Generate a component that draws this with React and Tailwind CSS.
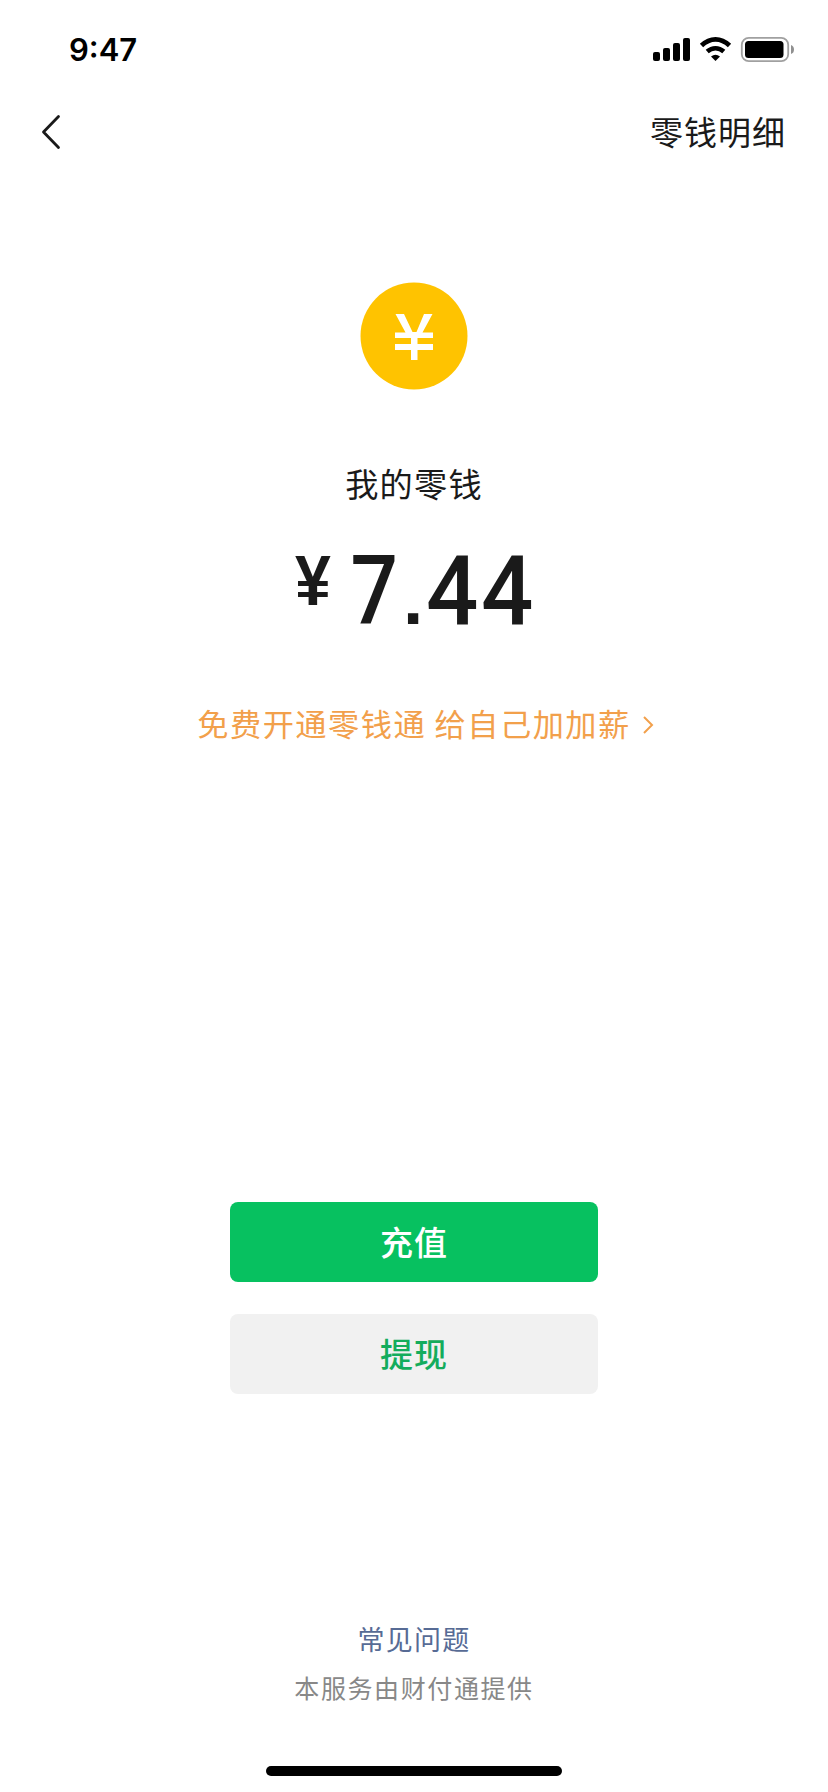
function StatusBar() {
  return (
    <div className="flex h-[88px] items-start justify-between pl-[69px] pr-[34px] text-black">
      <span className="mt-[30px] font-['Inter',sans-serif] text-[31px] font-semibold leading-[40px]">9:47</span>
      <svg className="mt-[34px]" width="142" height="30" viewBox="652 34 142 30" fill="none">
        <g fill="#000">
          <rect x="653" y="52" width="7" height="9" rx="2" />
          <rect x="663" y="48" width="7" height="13" rx="2" />
          <rect x="673" y="43" width="7" height="18" rx="2" />
          <rect x="683" y="38" width="7" height="23" rx="2" />
          <path d="M715.5 61 L711 56.6 Q715.5 52.8 720 56.6 Z" />
        </g>
        <path d="M701.5 45.6 Q708 39.4 715.5 39.4 T729.5 45.6" stroke="#000" strokeWidth="4.8" />
        <path d="M707.2 51.6 Q711 48.3 715.5 48.3 T723.8 51.6" stroke="#000" strokeWidth="4.6" />
        <rect x="741.8" y="37.8" width="46.4" height="23.4" rx="7" stroke="#a0a0a0" strokeWidth="1.8" />
        <rect x="745" y="41" width="38.5" height="17" rx="3.5" fill="#000" />
        <path d="M791 45 Q794 46 794 49.5 T791 54 Z" fill="#909090" />
      </svg>
    </div>
  );
}

function Amount() {
  return (
    <div className="mt-[36px] flex h-[96px] items-start font-['Roboto',sans-serif] text-[96px] font-medium leading-[96px]">
      <span className="-mt-[2px] mr-[14px] w-[40px] scale-x-[0.92] text-center font-['Liberation_Sans',sans-serif] text-[70px] font-bold leading-[80px]">¥</span>
      <span className="w-[52px] scale-x-[0.87] text-center">7</span>
      <span className="ml-[1px] mr-[1px] w-[24px] origin-[50%_85%] scale-[0.76] text-center font-['Liberation_Sans',sans-serif] font-bold">.</span>
      <span className="flex w-[55px] justify-center"><span className="scale-x-[0.96]">4</span></span>
      <span className="flex w-[55px] justify-center"><span className="scale-x-[0.96]">4</span></span>
    </div>
  );
}

export default function App() {
  return (
    <main className="flex h-[1792px] w-[828px] flex-col bg-white font-['Noto_Sans_CJK_SC',sans-serif] text-[#1a1a1a]">
      <StatusBar />
      <header className="flex h-[88px] items-center justify-between pl-[40px] pr-[42px]">
        <svg width="22" height="36" viewBox="0 0 22 36" fill="none" stroke="#1a1a1a" strokeWidth="2.8" strokeLinecap="round" strokeLinejoin="round">
          <path d="M18.5 2.5 L3.5 18 L18.5 33.5" />
        </svg>
        <span className="-mt-[2px] text-[33px] leading-[48px] tracking-[1px]">零钱明细</span>
      </header>

      <section className="flex flex-col items-center pt-[106px]">
        <svg width="108" height="108" viewBox="0 0 108 108">
          <circle cx="54" cy="54" r="53.5" fill="#ffc300" />
          <path
            d="M35.5 32 h8.5 L52.5 50 H56.5 L64 32 h8.5 L62.5 50.5 H73 V56 H57.5 V62 H73 V68 H57.5 V78 H51 V68 H35 V62 H51 V56 H35 V50.5 H45.5 Z"
            fill="#fff"
          />
        </svg>
        <h1 className="mt-[69px] text-[33.2px] leading-[48px] tracking-[1.2px]">我的零钱</h1>
        <Amount />
        <a className="mt-[61px] ml-[24px] flex items-center text-[31.2px] leading-[46px] tracking-[1.5px] text-[#f2a04b]">
          免费开通零钱通 给自己加加薪
          <svg className="ml-[10px] mt-[3px]" width="14" height="22" viewBox="0 0 14 22" fill="none" stroke="#f2a04b" strokeWidth="2">
            <path d="M3 3 L11 11 L3 19" />
          </svg>
        </a>
      </section>

      <section className="mt-auto flex flex-col items-center gap-8 text-[33px] font-medium tracking-[1px]">
        <button className="h-[80px] w-[368px] rounded-lg bg-[#07c160] text-white">充值</button>
        <button className="h-[80px] w-[368px] rounded-lg bg-[#f1f1f1] text-[#14ac5c]">提现</button>
      </section>

      <footer className="flex h-[398px] flex-col items-center pt-[225px]">
        <a className="text-[27px] leading-[40px] tracking-[1.3px] text-[#576b95]">常见问题</a>
        <p className="mt-[8px] text-[25px] leading-[40px] tracking-[1.6px] text-[#888888]">本服务由财付通提供</p>
        <div className="mt-auto mb-4 h-[10px] w-[296px] rounded-full bg-black" />
      </footer>
    </main>
  );
}
